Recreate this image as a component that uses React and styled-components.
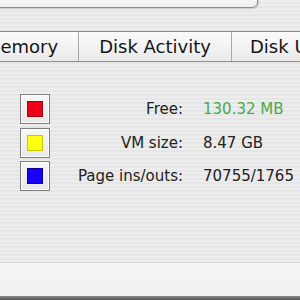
import React from "react";
import styled, { createGlobalStyle } from "styled-components";

const Global = createGlobalStyle`
  html, body { margin: 0; padding: 0; }
  body { font-family: "DejaVu Sans", "Liberation Sans", sans-serif; }
`;

const stripes = `repeating-linear-gradient(180deg, #ededed 0px, #ededed 2px, #e6e6e6 2px, #e6e6e6 4px)`;

const Window = styled.div`
  width: 300px;
  height: 300px;
  overflow: hidden;
  display: flex;
  flex-direction: column;
  background: ${stripes};
`;

const TopBox = styled.div`
  flex: none;
  width: 268px;
  height: 18px;
  margin-top: -10px;
  margin-left: -10px;
  box-sizing: border-box;
  border: 1px solid #8c8c8c;
  border-radius: 0 0 6px 0;
  background: linear-gradient(180deg, #fafafa, #f0f0f0);
  box-shadow: 1px 1px 1px rgba(0,0,0,0.15);
`;

const TabBar = styled.div`
  margin-top: 23px;
  height: 31px;
  box-sizing: border-box;
  display: flex;
  border-top: 1px solid #8a8a8a;
  border-bottom: 1px solid #8f8f8f;
  background: linear-gradient(180deg, #fbfbfb 0%, #f3f3f3 50%, #e9e9e9 100%);
  overflow: hidden;
  flex: none;
`;

const Tab = styled.div`
  flex: none;
  width: ${p => p.$w}px;
  margin-left: ${p => p.$offset || 0}px;
  display: flex;
  align-items: center;
  justify-content: ${p => p.$align || "center"};
  padding-left: ${p => p.$pad || 0}px;
  box-sizing: border-box;
  border-right: 1px solid #a8a8a8;
  font-size: 18px;
  color: #151515;
  white-space: nowrap;
`;

const Content = styled.div`
  flex: 1;
  padding: 32px 0 0 20px;
  box-sizing: border-box;
`;

const Grid = styled.div`
  display: grid;
  grid-template-columns: 30px 133px auto;
  grid-auto-rows: 30px;
  row-gap: 3.5px;
  align-items: center;
`;

const Swatch = styled.div`
  width: 30px;
  height: 30px;
  box-sizing: border-box;
  border: 1px solid #7e7e7e;
  background: linear-gradient(180deg, #f6f6f6, #e8e8e8);
  box-shadow: inset 0 0 0 1px #ffffff;
  display: flex;
  align-items: center;
  justify-content: center;
`;

const Chip = styled.div`
  width: 16px;
  height: 16px;
  box-sizing: border-box;
  background: ${p => p.$color};
  border: 1px solid ${p => p.$edge};
`;

const Label = styled.div`
  text-align: right;
  font-size: 15px;
  color: #222;
  white-space: nowrap;
`;

const Value = styled.div`
  padding-left: 20px;
  font-size: 15px;
  color: ${p => p.$color || "#222"};
  white-space: nowrap;
`;

const Footer = styled.div`
  flex: none;
  height: 34px;
  box-sizing: border-box;
  border-top: 1px solid #d2d2d2;
  background: linear-gradient(180deg, #f5f5f5, #f1f1f1);
`;

const BottomEdge = styled.div`
  flex: none;
  height: 4px;
  background: linear-gradient(180deg, #8a8a8a, #555555);
`;

const rows = [
  { color: "#ec0018", edge: "#a8000f", label: "Free:", value: "130.32 MB", vcolor: "#4aa94a" },
  { color: "#ffff10", edge: "#c8c800", label: "VM size:", value: "8.47 GB" },
  { color: "#1800ff", edge: "#0a0098", label: "Page ins/outs:", value: "70755/1765" },
];

export default function App() {
  return (
    <>
      <Global />
      <Window>
        <TopBox />
        <TabBar>
          <Tab $w={114} $offset={-35}>Memory</Tab>
          <Tab $w={153}>Disk Activity</Tab>
          <Tab $w={120} $align="flex-start" $pad={18}>Disk Usage</Tab>
        </TabBar>
        <Content>
          <Grid>
            {rows.map(r => (
              <React.Fragment key={r.label}>
                <Swatch><Chip $color={r.color} $edge={r.edge} /></Swatch>
                <Label>{r.label}</Label>
                <Value $color={r.vcolor}>{r.value}</Value>
              </React.Fragment>
            ))}
          </Grid>
        </Content>
        <Footer />
        <BottomEdge />
      </Window>
    </>
  );
}
